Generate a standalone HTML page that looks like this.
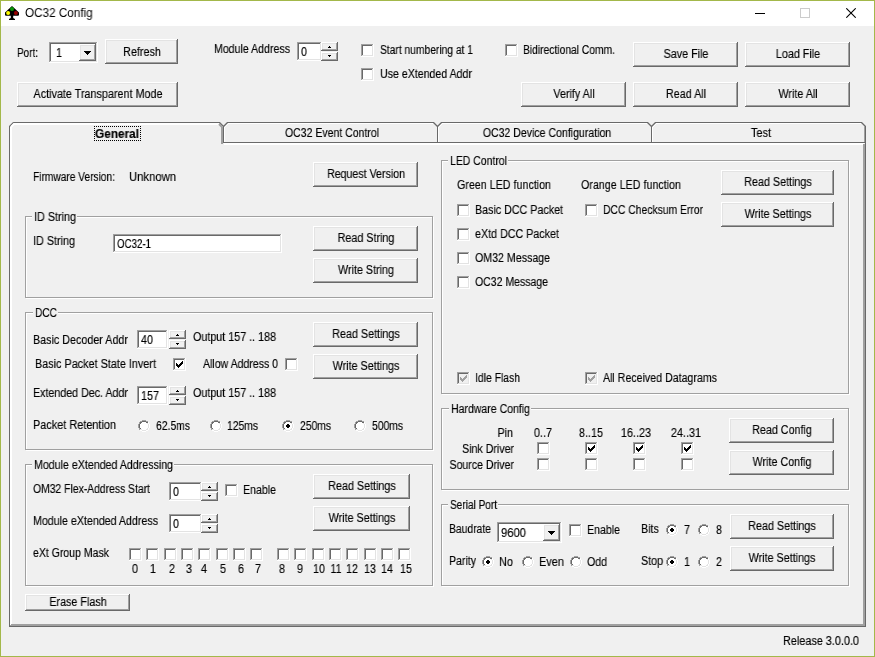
<!DOCTYPE html>
<html><head><meta charset="utf-8"><title>OC32 Config</title>
<style>
html,body{margin:0;padding:0;overflow:hidden}
body{width:875px;height:657px;overflow:hidden;background:#f0f0f0;position:relative;font-family:"Liberation Sans",sans-serif;font-size:12.5px;color:#000}
#win{position:absolute;left:0;top:0;width:873px;height:655px;border:1px solid #a3b84a;background:#f0f0f0}
#title{position:absolute;left:1px;top:1px;width:873px;height:25px;background:#fff}
.t{position:absolute;white-space:nowrap;will-change:transform;-webkit-text-stroke:0.15px #000;line-height:14px;height:14px;transform-origin:0 0}
.t.c{width:300px;text-align:center;transform-origin:150px 0}
.t.r{width:300px;text-align:right;transform-origin:300px 0}
.b{font-weight:bold}
.abs{position:absolute}
.btn{position:absolute;box-sizing:border-box;background:#f0f0f0;box-shadow:inset -1px -1px 0 #696969,inset 1px 1px 0 #fff,inset -2px -2px 0 #a0a0a0,inset 2px 2px 0 #e3e3e3}
.sunk{position:absolute;box-sizing:border-box;background:#fff;box-shadow:inset -1px -1px 0 #fff,inset 1px 1px 0 #a0a0a0,inset -2px -2px 0 #e3e3e3,inset 2px 2px 0 #696969}
.cb{position:absolute;width:13px;height:13px;background:#fff;box-shadow:inset -1px -1px 0 #fff,inset 1px 1px 0 #a0a0a0,inset -2px -2px 0 #e3e3e3,inset 2px 2px 0 #696969}
.cb.dis{background:#f0f0f0}
.rb{position:absolute}
.grp{position:absolute;border:1px solid #a0a0a0;box-shadow:1px 1px 0 #fff,inset 1px 1px 0 #fff}
.lg{position:absolute;height:12px;background:#f0f0f0}
.ln{position:absolute}
</style></head><body>
<div id="win"></div><div id="title"></div>

<svg class="abs" style="left:5px;top:6px" width="14" height="14" viewBox="0 0 14 14">
<path d="M7 0L14 6.6V8.8Q14 9.8 13 9.8H8.2V12L10 13V14H4V13L5.8 12V9.8H1Q0 9.8 0 8.8V6.6z" fill="#000"/>
<circle cx="7" cy="3" r="2" fill="#089808"/><circle cx="3.1" cy="7" r="2" fill="#ffff00"/><circle cx="10.9" cy="7" r="2" fill="#980000"/></svg>
<span class="abs" style="left:25px;top:5px;font-size:12px;line-height:16px;white-space:nowrap;transform-origin:0 0;transform:scaleX(.975);will-change:transform" id="ttl">OC32 Config</span>
<div class="ln" style="left:755px;top:13px;width:10px;height:1px;background:#000"></div>
<div class="ln" style="left:800px;top:8px;width:8px;height:8px;border:1px solid #cccccc"></div>
<svg class="abs" style="left:846px;top:8px" width="10" height="10" viewBox="0 0 10 10"><path d="M0.3 0.3L9.7 9.7M9.7 0.3L0.3 9.7" stroke="#000" stroke-width="1.1" fill="none"/></svg>
<span class="t" style="left:16.5px;top:46px;transform:scaleX(0.7953)">Port:</span>
<div class="sunk" style="left:49px;top:42px;width:49px;height:21px"></div>
<div class="btn" style="left:79px;top:44px;width:17px;height:17px"></div>
<svg class="abs" style="left:84px;top:51px" width="7" height="4" viewBox="0 0 7 4" shape-rendering="crispEdges"><path d="M0 0h7v1h-1v1h-1v1h-1v1h-1v-1h-1v-1h-1v-1h-1z" fill="#000"/></svg>
<span class="t" style="left:55.5px;top:46px;transform:scaleX(0.86)">1</span>
<div class="btn" style="left:105px;top:39px;width:73px;height:25px"></div>
<span class="t c" style="left:-8.5px;top:45px;transform:scaleX(0.86)">Refresh</span>
<span class="t" style="left:213.5px;top:42px;transform:scaleX(0.8478)">Module Address</span>
<div class="sunk" style="left:297px;top:42px;width:25px;height:19px"></div>
<span class="t" style="left:300.5px;top:45px;transform:scaleX(0.86)">0</span>
<div class="btn" style="left:321px;top:42px;width:17px;height:9px"></div>
<svg class="abs" style="left:328px;top:46px" width="3" height="2" viewBox="0 0 3 2" shape-rendering="crispEdges"><path d="M1 0h1v1h1v1h-3v-1h1z" fill="#000"/></svg>
<div class="btn" style="left:321px;top:52px;width:17px;height:9px"></div>
<svg class="abs" style="left:328px;top:55px" width="3" height="2" viewBox="0 0 3 2" shape-rendering="crispEdges"><path d="M0 0h3v1h-1v1h-1v-1h-1z" fill="#000"/></svg>
<div class="cb" style="left:361px;top:44px"></div>
<span class="t" style="left:379.5px;top:43px;transform:scaleX(0.8211)">Start numbering at 1</span>
<div class="cb" style="left:361px;top:68px"></div>
<span class="t" style="left:379.5px;top:67px;transform:scaleX(0.8485)">Use eXtended Addr</span>
<div class="cb" style="left:505px;top:44px"></div>
<span class="t" style="left:522.5px;top:43px;transform:scaleX(0.8226)">Bidirectional Comm.</span>
<div class="btn" style="left:633px;top:42px;width:105px;height:25px"></div>
<span class="t c" style="left:535.5px;top:47px;transform:scaleX(0.86)">Save File</span>
<div class="btn" style="left:745px;top:42px;width:105px;height:25px"></div>
<span class="t c" style="left:647.5px;top:47px;transform:scaleX(0.86)">Load File</span>
<div class="btn" style="left:17px;top:82px;width:161px;height:25px"></div>
<span class="t c" style="left:-52.5px;top:87px;transform:scaleX(0.8635)">Activate Transparent Mode</span>
<div class="btn" style="left:521px;top:82px;width:105px;height:25px"></div>
<span class="t c" style="left:423.5px;top:87px;transform:scaleX(0.86)">Verify All</span>
<div class="btn" style="left:633px;top:82px;width:105px;height:25px"></div>
<span class="t c" style="left:535.5px;top:87px;transform:scaleX(0.86)">Read All</span>
<div class="btn" style="left:745px;top:82px;width:105px;height:25px"></div>
<span class="t c" style="left:647.5px;top:87px;transform:scaleX(0.86)">Write All</span>
<svg class="abs" style="left:0;top:0" width="875" height="657" viewBox="0 0 875 657"><rect x="9" y="126" width="1" height="501" fill="#696969" shape-rendering="crispEdges"/><rect x="9" y="626" width="857" height="1" fill="#696969" shape-rendering="crispEdges"/><rect x="865" y="126" width="1" height="501" fill="#696969" shape-rendering="crispEdges"/><rect x="223" y="142" width="643" height="1" fill="#696969" shape-rendering="crispEdges"/><rect x="10" y="127" width="2" height="498" fill="#fff" shape-rendering="crispEdges"/><rect x="224" y="143" width="640" height="2" fill="#fff" shape-rendering="crispEdges"/><rect x="863" y="144" width="2" height="482" fill="#a0a0a0" shape-rendering="crispEdges"/><rect x="11" y="624" width="854" height="2" fill="#a0a0a0" shape-rendering="crispEdges"/><rect x="10" y="625" width="1" height="1" fill="#a0a0a0" shape-rendering="crispEdges"/><rect x="863" y="143" width="1" height="1" fill="#fff" shape-rendering="crispEdges"/><rect x="13" y="122" width="207" height="1" fill="#696969" shape-rendering="crispEdges"/><path d="M9.5 126.5L13.5 122.5" fill="none" stroke="#696969" stroke-width="1.2"/><path d="M223.5 126.5L219.5 122.5" fill="none" stroke="#696969" stroke-width="1.2"/><rect x="14" y="123" width="205" height="2" fill="#fff" shape-rendering="crispEdges"/><path d="M11 127L14.5 123.5" fill="none" stroke="#fff" stroke-width="2"/><rect x="221" y="127" width="2" height="17" fill="#a0a0a0" shape-rendering="crispEdges"/><path d="M222 127L219 124" fill="none" stroke="#a0a0a0" stroke-width="2"/><rect x="227" y="122" width="207" height="1" fill="#696969" shape-rendering="crispEdges"/><path d="M223.5 126.5L227.5 122.5" fill="none" stroke="#696969" stroke-width="1.2"/><path d="M437.5 126.5L433.5 122.5" fill="none" stroke="#696969" stroke-width="1.2"/><rect x="223" y="126" width="1" height="17" fill="#696969" shape-rendering="crispEdges"/><rect x="228" y="123" width="205" height="1" fill="#fff" shape-rendering="crispEdges"/><rect x="224" y="127" width="1" height="15" fill="#fff" shape-rendering="crispEdges"/><path d="M224.5 127.5L228.5 123.5" fill="none" stroke="#fff" stroke-width="1"/><rect x="441" y="122" width="207" height="1" fill="#696969" shape-rendering="crispEdges"/><path d="M437.5 126.5L441.5 122.5" fill="none" stroke="#696969" stroke-width="1.2"/><path d="M651.5 126.5L647.5 122.5" fill="none" stroke="#696969" stroke-width="1.2"/><rect x="437" y="126" width="1" height="17" fill="#696969" shape-rendering="crispEdges"/><rect x="442" y="123" width="205" height="1" fill="#fff" shape-rendering="crispEdges"/><rect x="438" y="127" width="1" height="15" fill="#fff" shape-rendering="crispEdges"/><path d="M438.5 127.5L442.5 123.5" fill="none" stroke="#fff" stroke-width="1"/><rect x="655" y="122" width="207" height="1" fill="#696969" shape-rendering="crispEdges"/><path d="M651.5 126.5L655.5 122.5" fill="none" stroke="#696969" stroke-width="1.2"/><path d="M865.5 126.5L861.5 122.5" fill="none" stroke="#696969" stroke-width="1.2"/><rect x="651" y="126" width="1" height="17" fill="#696969" shape-rendering="crispEdges"/><rect x="656" y="123" width="205" height="1" fill="#fff" shape-rendering="crispEdges"/><rect x="652" y="127" width="1" height="15" fill="#fff" shape-rendering="crispEdges"/><path d="M652.5 127.5L656.5 123.5" fill="none" stroke="#fff" stroke-width="1"/><rect x="864" y="126" width="1" height="16" fill="#a0a0a0" shape-rendering="crispEdges"/></svg>
<span class="t c b" style="left:-33px;top:127px;transform:scaleX(0.945)">General</span>
<div class="ln" style="left:94px;top:126px;width:45px;height:13px;border:1px dotted #000"></div>
<span class="t c" style="left:181.5px;top:126px;transform:scaleX(0.8403)">OC32 Event Control</span>
<span class="t c" style="left:396.75px;top:126px;transform:scaleX(0.8444)">OC32 Device Configuration</span>
<span class="t c" style="left:611px;top:126px;transform:scaleX(0.8719)">Test</span>
<span class="t" style="left:32.5px;top:170px;transform:scaleX(0.814)">Firmware Version:</span>
<span class="t" style="left:128.5px;top:170px;transform:scaleX(0.9017)">Unknown</span>
<div class="btn" style="left:313px;top:162px;width:105px;height:25px"></div>
<span class="t c" style="left:215.5px;top:167px;transform:scaleX(0.8503)">Request Version</span>
<div class="grp" style="left:25px;top:216px;width:406px;height:80px"></div>
<div class="lg" style="left:32px;top:210px;width:45px"></div>
<span class="t" style="left:33.5px;top:210px;transform:scaleX(0.8635)">ID String</span>
<span class="t" style="left:32.5px;top:234px;transform:scaleX(0.8635)">ID String</span>
<div class="sunk" style="left:113px;top:234px;width:169px;height:19px"></div>
<span class="t" style="left:116.5px;top:237px;transform:scaleX(0.7766)">OC32-1</span>
<div class="btn" style="left:313px;top:226px;width:105px;height:25px"></div>
<span class="t c" style="left:215.5px;top:231px;transform:scaleX(0.86)">Read String</span>
<div class="btn" style="left:313px;top:258px;width:105px;height:25px"></div>
<span class="t c" style="left:215.5px;top:263px;transform:scaleX(0.86)">Write String</span>
<div class="grp" style="left:25px;top:312px;width:406px;height:136px"></div>
<div class="lg" style="left:33px;top:306px;width:25px"></div>
<span class="t" style="left:34.5px;top:306px;transform:scaleX(0.812)">DCC</span>
<span class="t" style="left:32.5px;top:333px;transform:scaleX(0.8599)">Basic Decoder Addr</span>
<div class="sunk" style="left:137px;top:330px;width:31px;height:19px"></div>
<span class="t" style="left:140.5px;top:333px;transform:scaleX(0.86)">40</span>
<div class="btn" style="left:169px;top:330px;width:17px;height:9px"></div>
<svg class="abs" style="left:176px;top:334px" width="3" height="2" viewBox="0 0 3 2" shape-rendering="crispEdges"><path d="M1 0h1v1h1v1h-3v-1h1z" fill="#000"/></svg>
<div class="btn" style="left:169px;top:340px;width:17px;height:9px"></div>
<svg class="abs" style="left:176px;top:343px" width="3" height="2" viewBox="0 0 3 2" shape-rendering="crispEdges"><path d="M0 0h3v1h-1v1h-1v-1h-1z" fill="#000"/></svg>
<span class="t" style="left:192.5px;top:330px;transform:scaleX(0.8591)">Output 157 .. 188</span>
<div class="btn" style="left:313px;top:322px;width:105px;height:25px"></div>
<span class="t c" style="left:215.5px;top:327px;transform:scaleX(0.86)">Read Settings</span>
<span class="t" style="left:34.5px;top:357px;transform:scaleX(0.8664)">Basic Packet State Invert</span>
<div class="cb" style="left:173px;top:358px"><svg width="13" height="13" viewBox="0 0 13 13" style="position:absolute;left:0;top:0" shape-rendering="crispEdges" fill="#000"><rect x="3" y="5" width="1" height="3"/><rect x="4" y="6" width="1" height="3"/><rect x="5" y="7" width="1" height="3"/><rect x="6" y="6" width="1" height="3"/><rect x="7" y="5" width="1" height="3"/><rect x="8" y="4" width="1" height="3"/><rect x="9" y="3" width="1" height="3"/></svg></div>
<span class="t" style="left:202.5px;top:357px;transform:scaleX(0.8433)">Allow Address 0</span>
<div class="cb" style="left:285px;top:358px"></div>
<div class="btn" style="left:313px;top:354px;width:105px;height:25px"></div>
<span class="t c" style="left:215.5px;top:359px;transform:scaleX(0.86)">Write Settings</span>
<span class="t" style="left:32.5px;top:386px;transform:scaleX(0.8544)">Extended Dec. Addr</span>
<div class="sunk" style="left:137px;top:386px;width:31px;height:19px"></div>
<span class="t" style="left:140.5px;top:389px;transform:scaleX(0.86)">157</span>
<div class="btn" style="left:169px;top:386px;width:17px;height:9px"></div>
<svg class="abs" style="left:176px;top:390px" width="3" height="2" viewBox="0 0 3 2" shape-rendering="crispEdges"><path d="M1 0h1v1h1v1h-3v-1h1z" fill="#000"/></svg>
<div class="btn" style="left:169px;top:396px;width:17px;height:9px"></div>
<svg class="abs" style="left:176px;top:399px" width="3" height="2" viewBox="0 0 3 2" shape-rendering="crispEdges"><path d="M0 0h3v1h-1v1h-1v-1h-1z" fill="#000"/></svg>
<span class="t" style="left:192.5px;top:386px;transform:scaleX(0.8591)">Output 157 .. 188</span>
<span class="t" style="left:32.5px;top:418px;transform:scaleX(0.8718)">Packet Retention</span>
<svg class="rb" style="left:138px;top:420px" width="12" height="12" viewBox="0 0 12 12" shape-rendering="crispEdges"><rect x="4" y="0" width="4" height="1" fill="#a0a0a0"/><rect x="2" y="1" width="2" height="1" fill="#a0a0a0"/><rect x="4" y="1" width="4" height="1" fill="#696969"/><rect x="8" y="1" width="2" height="1" fill="#a0a0a0"/><rect x="1" y="2" width="1" height="1" fill="#a0a0a0"/><rect x="2" y="2" width="2" height="1" fill="#696969"/><rect x="4" y="2" width="4" height="1" fill="#ffffff"/><rect x="8" y="2" width="2" height="1" fill="#696969"/><rect x="10" y="2" width="1" height="1" fill="#ffffff"/><rect x="1" y="3" width="1" height="1" fill="#a0a0a0"/><rect x="2" y="3" width="1" height="1" fill="#696969"/><rect x="3" y="3" width="6" height="1" fill="#ffffff"/><rect x="9" y="3" width="1" height="1" fill="#e3e3e3"/><rect x="10" y="3" width="1" height="1" fill="#ffffff"/><rect x="0" y="4" width="1" height="1" fill="#a0a0a0"/><rect x="1" y="4" width="1" height="1" fill="#696969"/><rect x="2" y="4" width="8" height="1" fill="#ffffff"/><rect x="10" y="4" width="1" height="1" fill="#e3e3e3"/><rect x="11" y="4" width="1" height="1" fill="#ffffff"/><rect x="0" y="5" width="1" height="1" fill="#a0a0a0"/><rect x="1" y="5" width="1" height="1" fill="#696969"/><rect x="2" y="5" width="8" height="1" fill="#ffffff"/><rect x="10" y="5" width="1" height="1" fill="#e3e3e3"/><rect x="11" y="5" width="1" height="1" fill="#ffffff"/><rect x="0" y="6" width="1" height="1" fill="#a0a0a0"/><rect x="1" y="6" width="1" height="1" fill="#696969"/><rect x="2" y="6" width="8" height="1" fill="#ffffff"/><rect x="10" y="6" width="1" height="1" fill="#e3e3e3"/><rect x="11" y="6" width="1" height="1" fill="#ffffff"/><rect x="0" y="7" width="1" height="1" fill="#a0a0a0"/><rect x="1" y="7" width="1" height="1" fill="#696969"/><rect x="2" y="7" width="8" height="1" fill="#ffffff"/><rect x="10" y="7" width="1" height="1" fill="#e3e3e3"/><rect x="11" y="7" width="1" height="1" fill="#ffffff"/><rect x="1" y="8" width="1" height="1" fill="#a0a0a0"/><rect x="2" y="8" width="1" height="1" fill="#696969"/><rect x="3" y="8" width="6" height="1" fill="#ffffff"/><rect x="9" y="8" width="1" height="1" fill="#e3e3e3"/><rect x="10" y="8" width="1" height="1" fill="#ffffff"/><rect x="1" y="9" width="1" height="1" fill="#a0a0a0"/><rect x="2" y="9" width="2" height="1" fill="#e3e3e3"/><rect x="4" y="9" width="4" height="1" fill="#ffffff"/><rect x="8" y="9" width="2" height="1" fill="#e3e3e3"/><rect x="10" y="9" width="1" height="1" fill="#ffffff"/><rect x="2" y="10" width="2" height="1" fill="#ffffff"/><rect x="4" y="10" width="4" height="1" fill="#e3e3e3"/><rect x="8" y="10" width="2" height="1" fill="#ffffff"/><rect x="4" y="11" width="4" height="1" fill="#ffffff"/></svg>
<span class="t" style="left:155.5px;top:419px;transform:scaleX(0.8293)">62.5ms</span>
<svg class="rb" style="left:210px;top:420px" width="12" height="12" viewBox="0 0 12 12" shape-rendering="crispEdges"><rect x="4" y="0" width="4" height="1" fill="#a0a0a0"/><rect x="2" y="1" width="2" height="1" fill="#a0a0a0"/><rect x="4" y="1" width="4" height="1" fill="#696969"/><rect x="8" y="1" width="2" height="1" fill="#a0a0a0"/><rect x="1" y="2" width="1" height="1" fill="#a0a0a0"/><rect x="2" y="2" width="2" height="1" fill="#696969"/><rect x="4" y="2" width="4" height="1" fill="#ffffff"/><rect x="8" y="2" width="2" height="1" fill="#696969"/><rect x="10" y="2" width="1" height="1" fill="#ffffff"/><rect x="1" y="3" width="1" height="1" fill="#a0a0a0"/><rect x="2" y="3" width="1" height="1" fill="#696969"/><rect x="3" y="3" width="6" height="1" fill="#ffffff"/><rect x="9" y="3" width="1" height="1" fill="#e3e3e3"/><rect x="10" y="3" width="1" height="1" fill="#ffffff"/><rect x="0" y="4" width="1" height="1" fill="#a0a0a0"/><rect x="1" y="4" width="1" height="1" fill="#696969"/><rect x="2" y="4" width="8" height="1" fill="#ffffff"/><rect x="10" y="4" width="1" height="1" fill="#e3e3e3"/><rect x="11" y="4" width="1" height="1" fill="#ffffff"/><rect x="0" y="5" width="1" height="1" fill="#a0a0a0"/><rect x="1" y="5" width="1" height="1" fill="#696969"/><rect x="2" y="5" width="8" height="1" fill="#ffffff"/><rect x="10" y="5" width="1" height="1" fill="#e3e3e3"/><rect x="11" y="5" width="1" height="1" fill="#ffffff"/><rect x="0" y="6" width="1" height="1" fill="#a0a0a0"/><rect x="1" y="6" width="1" height="1" fill="#696969"/><rect x="2" y="6" width="8" height="1" fill="#ffffff"/><rect x="10" y="6" width="1" height="1" fill="#e3e3e3"/><rect x="11" y="6" width="1" height="1" fill="#ffffff"/><rect x="0" y="7" width="1" height="1" fill="#a0a0a0"/><rect x="1" y="7" width="1" height="1" fill="#696969"/><rect x="2" y="7" width="8" height="1" fill="#ffffff"/><rect x="10" y="7" width="1" height="1" fill="#e3e3e3"/><rect x="11" y="7" width="1" height="1" fill="#ffffff"/><rect x="1" y="8" width="1" height="1" fill="#a0a0a0"/><rect x="2" y="8" width="1" height="1" fill="#696969"/><rect x="3" y="8" width="6" height="1" fill="#ffffff"/><rect x="9" y="8" width="1" height="1" fill="#e3e3e3"/><rect x="10" y="8" width="1" height="1" fill="#ffffff"/><rect x="1" y="9" width="1" height="1" fill="#a0a0a0"/><rect x="2" y="9" width="2" height="1" fill="#e3e3e3"/><rect x="4" y="9" width="4" height="1" fill="#ffffff"/><rect x="8" y="9" width="2" height="1" fill="#e3e3e3"/><rect x="10" y="9" width="1" height="1" fill="#ffffff"/><rect x="2" y="10" width="2" height="1" fill="#ffffff"/><rect x="4" y="10" width="4" height="1" fill="#e3e3e3"/><rect x="8" y="10" width="2" height="1" fill="#ffffff"/><rect x="4" y="11" width="4" height="1" fill="#ffffff"/></svg>
<span class="t" style="left:226.5px;top:419px;transform:scaleX(0.826)">125ms</span>
<svg class="rb" style="left:282px;top:420px" width="12" height="12" viewBox="0 0 12 12" shape-rendering="crispEdges"><rect x="4" y="0" width="4" height="1" fill="#a0a0a0"/><rect x="2" y="1" width="2" height="1" fill="#a0a0a0"/><rect x="4" y="1" width="4" height="1" fill="#696969"/><rect x="8" y="1" width="2" height="1" fill="#a0a0a0"/><rect x="1" y="2" width="1" height="1" fill="#a0a0a0"/><rect x="2" y="2" width="2" height="1" fill="#696969"/><rect x="4" y="2" width="4" height="1" fill="#ffffff"/><rect x="8" y="2" width="2" height="1" fill="#696969"/><rect x="10" y="2" width="1" height="1" fill="#ffffff"/><rect x="1" y="3" width="1" height="1" fill="#a0a0a0"/><rect x="2" y="3" width="1" height="1" fill="#696969"/><rect x="3" y="3" width="6" height="1" fill="#ffffff"/><rect x="9" y="3" width="1" height="1" fill="#e3e3e3"/><rect x="10" y="3" width="1" height="1" fill="#ffffff"/><rect x="0" y="4" width="1" height="1" fill="#a0a0a0"/><rect x="1" y="4" width="1" height="1" fill="#696969"/><rect x="2" y="4" width="3" height="1" fill="#ffffff"/><rect x="5" y="4" width="2" height="1" fill="#000000"/><rect x="7" y="4" width="3" height="1" fill="#ffffff"/><rect x="10" y="4" width="1" height="1" fill="#e3e3e3"/><rect x="11" y="4" width="1" height="1" fill="#ffffff"/><rect x="0" y="5" width="1" height="1" fill="#a0a0a0"/><rect x="1" y="5" width="1" height="1" fill="#696969"/><rect x="2" y="5" width="2" height="1" fill="#ffffff"/><rect x="4" y="5" width="4" height="1" fill="#000000"/><rect x="8" y="5" width="2" height="1" fill="#ffffff"/><rect x="10" y="5" width="1" height="1" fill="#e3e3e3"/><rect x="11" y="5" width="1" height="1" fill="#ffffff"/><rect x="0" y="6" width="1" height="1" fill="#a0a0a0"/><rect x="1" y="6" width="1" height="1" fill="#696969"/><rect x="2" y="6" width="2" height="1" fill="#ffffff"/><rect x="4" y="6" width="4" height="1" fill="#000000"/><rect x="8" y="6" width="2" height="1" fill="#ffffff"/><rect x="10" y="6" width="1" height="1" fill="#e3e3e3"/><rect x="11" y="6" width="1" height="1" fill="#ffffff"/><rect x="0" y="7" width="1" height="1" fill="#a0a0a0"/><rect x="1" y="7" width="1" height="1" fill="#696969"/><rect x="2" y="7" width="3" height="1" fill="#ffffff"/><rect x="5" y="7" width="2" height="1" fill="#000000"/><rect x="7" y="7" width="3" height="1" fill="#ffffff"/><rect x="10" y="7" width="1" height="1" fill="#e3e3e3"/><rect x="11" y="7" width="1" height="1" fill="#ffffff"/><rect x="1" y="8" width="1" height="1" fill="#a0a0a0"/><rect x="2" y="8" width="1" height="1" fill="#696969"/><rect x="3" y="8" width="6" height="1" fill="#ffffff"/><rect x="9" y="8" width="1" height="1" fill="#e3e3e3"/><rect x="10" y="8" width="1" height="1" fill="#ffffff"/><rect x="1" y="9" width="1" height="1" fill="#a0a0a0"/><rect x="2" y="9" width="2" height="1" fill="#e3e3e3"/><rect x="4" y="9" width="4" height="1" fill="#ffffff"/><rect x="8" y="9" width="2" height="1" fill="#e3e3e3"/><rect x="10" y="9" width="1" height="1" fill="#ffffff"/><rect x="2" y="10" width="2" height="1" fill="#ffffff"/><rect x="4" y="10" width="4" height="1" fill="#e3e3e3"/><rect x="8" y="10" width="2" height="1" fill="#ffffff"/><rect x="4" y="11" width="4" height="1" fill="#ffffff"/></svg>
<span class="t" style="left:299.5px;top:419px;transform:scaleX(0.826)">250ms</span>
<svg class="rb" style="left:354px;top:420px" width="12" height="12" viewBox="0 0 12 12" shape-rendering="crispEdges"><rect x="4" y="0" width="4" height="1" fill="#a0a0a0"/><rect x="2" y="1" width="2" height="1" fill="#a0a0a0"/><rect x="4" y="1" width="4" height="1" fill="#696969"/><rect x="8" y="1" width="2" height="1" fill="#a0a0a0"/><rect x="1" y="2" width="1" height="1" fill="#a0a0a0"/><rect x="2" y="2" width="2" height="1" fill="#696969"/><rect x="4" y="2" width="4" height="1" fill="#ffffff"/><rect x="8" y="2" width="2" height="1" fill="#696969"/><rect x="10" y="2" width="1" height="1" fill="#ffffff"/><rect x="1" y="3" width="1" height="1" fill="#a0a0a0"/><rect x="2" y="3" width="1" height="1" fill="#696969"/><rect x="3" y="3" width="6" height="1" fill="#ffffff"/><rect x="9" y="3" width="1" height="1" fill="#e3e3e3"/><rect x="10" y="3" width="1" height="1" fill="#ffffff"/><rect x="0" y="4" width="1" height="1" fill="#a0a0a0"/><rect x="1" y="4" width="1" height="1" fill="#696969"/><rect x="2" y="4" width="8" height="1" fill="#ffffff"/><rect x="10" y="4" width="1" height="1" fill="#e3e3e3"/><rect x="11" y="4" width="1" height="1" fill="#ffffff"/><rect x="0" y="5" width="1" height="1" fill="#a0a0a0"/><rect x="1" y="5" width="1" height="1" fill="#696969"/><rect x="2" y="5" width="8" height="1" fill="#ffffff"/><rect x="10" y="5" width="1" height="1" fill="#e3e3e3"/><rect x="11" y="5" width="1" height="1" fill="#ffffff"/><rect x="0" y="6" width="1" height="1" fill="#a0a0a0"/><rect x="1" y="6" width="1" height="1" fill="#696969"/><rect x="2" y="6" width="8" height="1" fill="#ffffff"/><rect x="10" y="6" width="1" height="1" fill="#e3e3e3"/><rect x="11" y="6" width="1" height="1" fill="#ffffff"/><rect x="0" y="7" width="1" height="1" fill="#a0a0a0"/><rect x="1" y="7" width="1" height="1" fill="#696969"/><rect x="2" y="7" width="8" height="1" fill="#ffffff"/><rect x="10" y="7" width="1" height="1" fill="#e3e3e3"/><rect x="11" y="7" width="1" height="1" fill="#ffffff"/><rect x="1" y="8" width="1" height="1" fill="#a0a0a0"/><rect x="2" y="8" width="1" height="1" fill="#696969"/><rect x="3" y="8" width="6" height="1" fill="#ffffff"/><rect x="9" y="8" width="1" height="1" fill="#e3e3e3"/><rect x="10" y="8" width="1" height="1" fill="#ffffff"/><rect x="1" y="9" width="1" height="1" fill="#a0a0a0"/><rect x="2" y="9" width="2" height="1" fill="#e3e3e3"/><rect x="4" y="9" width="4" height="1" fill="#ffffff"/><rect x="8" y="9" width="2" height="1" fill="#e3e3e3"/><rect x="10" y="9" width="1" height="1" fill="#ffffff"/><rect x="2" y="10" width="2" height="1" fill="#ffffff"/><rect x="4" y="10" width="4" height="1" fill="#e3e3e3"/><rect x="8" y="10" width="2" height="1" fill="#ffffff"/><rect x="4" y="11" width="4" height="1" fill="#ffffff"/></svg>
<span class="t" style="left:371.5px;top:419px;transform:scaleX(0.826)">500ms</span>
<div class="grp" style="left:25px;top:464px;width:406px;height:120px"></div>
<div class="lg" style="left:32px;top:458px;width:142px"></div>
<span class="t" style="left:33.5px;top:458px;transform:scaleX(0.8511)">Module eXtended Addressing</span>
<span class="t" style="left:32.5px;top:482px;transform:scaleX(0.8297)">OM32 Flex-Address Start</span>
<div class="sunk" style="left:169px;top:482px;width:33px;height:19px"></div>
<span class="t" style="left:172.5px;top:485px;transform:scaleX(0.86)">0</span>
<div class="btn" style="left:201px;top:482px;width:17px;height:9px"></div>
<svg class="abs" style="left:208px;top:486px" width="3" height="2" viewBox="0 0 3 2" shape-rendering="crispEdges"><path d="M1 0h1v1h1v1h-3v-1h1z" fill="#000"/></svg>
<div class="btn" style="left:201px;top:492px;width:17px;height:9px"></div>
<svg class="abs" style="left:208px;top:495px" width="3" height="2" viewBox="0 0 3 2" shape-rendering="crispEdges"><path d="M0 0h3v1h-1v1h-1v-1h-1z" fill="#000"/></svg>
<div class="cb" style="left:225px;top:484px"></div>
<span class="t" style="left:242.5px;top:483px;transform:scaleX(0.8475)">Enable</span>
<div class="btn" style="left:313px;top:474px;width:97px;height:25px"></div>
<span class="t c" style="left:211.5px;top:479px;transform:scaleX(0.86)">Read Settings</span>
<span class="t" style="left:32.5px;top:514px;transform:scaleX(0.8524)">Module eXtended Address</span>
<div class="sunk" style="left:169px;top:514px;width:33px;height:19px"></div>
<span class="t" style="left:172.5px;top:517px;transform:scaleX(0.86)">0</span>
<div class="btn" style="left:201px;top:514px;width:17px;height:9px"></div>
<svg class="abs" style="left:208px;top:518px" width="3" height="2" viewBox="0 0 3 2" shape-rendering="crispEdges"><path d="M1 0h1v1h1v1h-3v-1h1z" fill="#000"/></svg>
<div class="btn" style="left:201px;top:524px;width:17px;height:9px"></div>
<svg class="abs" style="left:208px;top:527px" width="3" height="2" viewBox="0 0 3 2" shape-rendering="crispEdges"><path d="M0 0h3v1h-1v1h-1v-1h-1z" fill="#000"/></svg>
<div class="btn" style="left:313px;top:506px;width:97px;height:25px"></div>
<span class="t c" style="left:211.5px;top:511px;transform:scaleX(0.86)">Write Settings</span>
<span class="t" style="left:32.5px;top:546px;transform:scaleX(0.8414)">eXt Group Mask</span>
<div class="cb" style="left:129px;top:548px"></div>
<span class="t c" style="left:-14.800000000000011px;top:562px;transform:scaleX(0.86)">0</span>
<div class="cb" style="left:146px;top:548px"></div>
<span class="t c" style="left:3px;top:562px;transform:scaleX(0.86)">1</span>
<div class="cb" style="left:164px;top:548px"></div>
<span class="t c" style="left:21.69999999999999px;top:562px;transform:scaleX(0.86)">2</span>
<div class="cb" style="left:181px;top:548px"></div>
<span class="t c" style="left:39.30000000000001px;top:562px;transform:scaleX(0.86)">3</span>
<div class="cb" style="left:198px;top:548px"></div>
<span class="t c" style="left:54.400000000000006px;top:562px;transform:scaleX(0.86)">4</span>
<div class="cb" style="left:216px;top:548px"></div>
<span class="t c" style="left:72.6px;top:562px;transform:scaleX(0.86)">5</span>
<div class="cb" style="left:233px;top:548px"></div>
<span class="t c" style="left:90.5px;top:562px;transform:scaleX(0.86)">6</span>
<div class="cb" style="left:250px;top:548px"></div>
<span class="t c" style="left:108.39999999999998px;top:562px;transform:scaleX(0.86)">7</span>
<div class="cb" style="left:277px;top:548px"></div>
<span class="t c" style="left:132.39999999999998px;top:562px;transform:scaleX(0.86)">8</span>
<div class="cb" style="left:294px;top:548px"></div>
<span class="t c" style="left:150.3px;top:562px;transform:scaleX(0.86)">9</span>
<div class="cb" style="left:312px;top:548px"></div>
<span class="t c" style="left:168.60000000000002px;top:562px;transform:scaleX(0.86)">10</span>
<div class="cb" style="left:329px;top:548px"></div>
<span class="t c" style="left:185.7px;top:562px;transform:scaleX(0.86)">11</span>
<div class="cb" style="left:346px;top:548px"></div>
<span class="t c" style="left:201.7px;top:562px;transform:scaleX(0.86)">12</span>
<div class="cb" style="left:364px;top:548px"></div>
<span class="t c" style="left:219.60000000000002px;top:562px;transform:scaleX(0.86)">13</span>
<div class="cb" style="left:381px;top:548px"></div>
<span class="t c" style="left:237.39999999999998px;top:562px;transform:scaleX(0.86)">14</span>
<div class="cb" style="left:398px;top:548px"></div>
<span class="t c" style="left:255.60000000000002px;top:562px;transform:scaleX(0.86)">15</span>
<div class="btn" style="left:25px;top:594px;width:105px;height:17px"></div>
<span class="t c" style="left:-72.5px;top:595px;transform:scaleX(0.86)">Erase Flash</span>
<div class="grp" style="left:441px;top:160px;width:406px;height:232px"></div>
<div class="lg" style="left:448px;top:154px;width:60px"></div>
<span class="t" style="left:449.5px;top:154px;transform:scaleX(0.8371)">LED Control</span>
<span class="t" style="left:456.5px;top:178px;transform:scaleX(0.8561)">Green LED function</span>
<span class="t" style="left:580.5px;top:178px;transform:scaleX(0.8565)">Orange LED function</span>
<div class="btn" style="left:721px;top:170px;width:113px;height:25px"></div>
<span class="t c" style="left:627.5px;top:175px;transform:scaleX(0.86)">Read Settings</span>
<div class="btn" style="left:721px;top:202px;width:113px;height:25px"></div>
<span class="t c" style="left:627.5px;top:207px;transform:scaleX(0.86)">Write Settings</span>
<div class="cb" style="left:457px;top:204px"></div>
<span class="t" style="left:474.5px;top:203px;transform:scaleX(0.8559)">Basic DCC Packet</span>
<div class="cb" style="left:585px;top:204px"></div>
<span class="t" style="left:602.5px;top:203px;transform:scaleX(0.8274)">DCC Checksum Error</span>
<div class="cb" style="left:457px;top:228px"></div>
<span class="t" style="left:474.5px;top:227px;transform:scaleX(0.8574)">eXtd DCC Packet</span>
<div class="cb" style="left:457px;top:252px"></div>
<span class="t" style="left:474.5px;top:251px;transform:scaleX(0.85)">OM32 Message</span>
<div class="cb" style="left:457px;top:276px"></div>
<span class="t" style="left:474.5px;top:275px;transform:scaleX(0.8404)">OC32 Message</span>
<div class="cb dis" style="left:457px;top:372px"><svg width="13" height="13" viewBox="0 0 13 13" style="position:absolute;left:0;top:0" shape-rendering="crispEdges" fill="#a0a0a0"><rect x="3" y="5" width="1" height="3"/><rect x="4" y="6" width="1" height="3"/><rect x="5" y="7" width="1" height="3"/><rect x="6" y="6" width="1" height="3"/><rect x="7" y="5" width="1" height="3"/><rect x="8" y="4" width="1" height="3"/><rect x="9" y="3" width="1" height="3"/></svg></div>
<span class="t" style="left:474.5px;top:371px;transform:scaleX(0.8302)">Idle Flash</span>
<div class="cb dis" style="left:585px;top:372px"><svg width="13" height="13" viewBox="0 0 13 13" style="position:absolute;left:0;top:0" shape-rendering="crispEdges" fill="#a0a0a0"><rect x="3" y="5" width="1" height="3"/><rect x="4" y="6" width="1" height="3"/><rect x="5" y="7" width="1" height="3"/><rect x="6" y="6" width="1" height="3"/><rect x="7" y="5" width="1" height="3"/><rect x="8" y="4" width="1" height="3"/><rect x="9" y="3" width="1" height="3"/></svg></div>
<span class="t" style="left:602.5px;top:371px;transform:scaleX(0.8502)">All Received Datagrams</span>
<div class="grp" style="left:441px;top:408px;width:406px;height:80px"></div>
<div class="lg" style="left:449px;top:402px;width:82px"></div>
<span class="t" style="left:450.5px;top:402px;transform:scaleX(0.8422)">Hardware Config</span>
<span class="t r" style="left:213px;top:426px;transform:scaleX(0.86)">Pin</span>
<span class="t c" style="left:393px;top:426px;transform:scaleX(0.86)">0..7</span>
<span class="t c" style="left:441px;top:426px;transform:scaleX(0.86)">8..15</span>
<span class="t c" style="left:486px;top:426px;transform:scaleX(0.86)">16..23</span>
<span class="t c" style="left:536px;top:426px;transform:scaleX(0.86)">24..31</span>
<span class="t r" style="left:214px;top:442px;transform:scaleX(0.8507)">Sink Driver</span>
<span class="t r" style="left:214px;top:458px;transform:scaleX(0.844)">Source Driver</span>
<div class="cb" style="left:537px;top:442px"></div>
<div class="cb" style="left:537px;top:458px"></div>
<div class="cb" style="left:585px;top:442px"><svg width="13" height="13" viewBox="0 0 13 13" style="position:absolute;left:0;top:0" shape-rendering="crispEdges" fill="#000"><rect x="3" y="5" width="1" height="3"/><rect x="4" y="6" width="1" height="3"/><rect x="5" y="7" width="1" height="3"/><rect x="6" y="6" width="1" height="3"/><rect x="7" y="5" width="1" height="3"/><rect x="8" y="4" width="1" height="3"/><rect x="9" y="3" width="1" height="3"/></svg></div>
<div class="cb" style="left:585px;top:458px"></div>
<div class="cb" style="left:633px;top:442px"><svg width="13" height="13" viewBox="0 0 13 13" style="position:absolute;left:0;top:0" shape-rendering="crispEdges" fill="#000"><rect x="3" y="5" width="1" height="3"/><rect x="4" y="6" width="1" height="3"/><rect x="5" y="7" width="1" height="3"/><rect x="6" y="6" width="1" height="3"/><rect x="7" y="5" width="1" height="3"/><rect x="8" y="4" width="1" height="3"/><rect x="9" y="3" width="1" height="3"/></svg></div>
<div class="cb" style="left:633px;top:458px"></div>
<div class="cb" style="left:681px;top:442px"><svg width="13" height="13" viewBox="0 0 13 13" style="position:absolute;left:0;top:0" shape-rendering="crispEdges" fill="#000"><rect x="3" y="5" width="1" height="3"/><rect x="4" y="6" width="1" height="3"/><rect x="5" y="7" width="1" height="3"/><rect x="6" y="6" width="1" height="3"/><rect x="7" y="5" width="1" height="3"/><rect x="8" y="4" width="1" height="3"/><rect x="9" y="3" width="1" height="3"/></svg></div>
<div class="cb" style="left:681px;top:458px"></div>
<div class="btn" style="left:729px;top:418px;width:105px;height:25px"></div>
<span class="t c" style="left:631.5px;top:423px;transform:scaleX(0.86)">Read Config</span>
<div class="btn" style="left:729px;top:450px;width:105px;height:25px"></div>
<span class="t c" style="left:631.5px;top:455px;transform:scaleX(0.86)">Write Config</span>
<div class="grp" style="left:441px;top:504px;width:406px;height:80px"></div>
<div class="lg" style="left:448px;top:498px;width:50px"></div>
<span class="t" style="left:449.5px;top:498px;transform:scaleX(0.8054)">Serial Port</span>
<span class="t" style="left:448.5px;top:522px;transform:scaleX(0.8278)">Baudrate</span>
<div class="sunk" style="left:497px;top:522px;width:65px;height:21px"></div>
<div class="btn" style="left:543px;top:524px;width:17px;height:17px"></div>
<svg class="abs" style="left:548px;top:531px" width="7" height="4" viewBox="0 0 7 4" shape-rendering="crispEdges"><path d="M0 0h7v1h-1v1h-1v1h-1v1h-1v-1h-1v-1h-1v-1h-1z" fill="#000"/></svg>
<span class="t" style="left:500.5px;top:526px;transform:scaleX(0.8989)">9600</span>
<div class="cb" style="left:569px;top:524px"></div>
<span class="t" style="left:586.5px;top:523px;transform:scaleX(0.8475)">Enable</span>
<span class="t" style="left:640.5px;top:522px;transform:scaleX(0.86)">Bits</span>
<svg class="rb" style="left:666px;top:524px" width="12" height="12" viewBox="0 0 12 12" shape-rendering="crispEdges"><rect x="4" y="0" width="4" height="1" fill="#a0a0a0"/><rect x="2" y="1" width="2" height="1" fill="#a0a0a0"/><rect x="4" y="1" width="4" height="1" fill="#696969"/><rect x="8" y="1" width="2" height="1" fill="#a0a0a0"/><rect x="1" y="2" width="1" height="1" fill="#a0a0a0"/><rect x="2" y="2" width="2" height="1" fill="#696969"/><rect x="4" y="2" width="4" height="1" fill="#ffffff"/><rect x="8" y="2" width="2" height="1" fill="#696969"/><rect x="10" y="2" width="1" height="1" fill="#ffffff"/><rect x="1" y="3" width="1" height="1" fill="#a0a0a0"/><rect x="2" y="3" width="1" height="1" fill="#696969"/><rect x="3" y="3" width="6" height="1" fill="#ffffff"/><rect x="9" y="3" width="1" height="1" fill="#e3e3e3"/><rect x="10" y="3" width="1" height="1" fill="#ffffff"/><rect x="0" y="4" width="1" height="1" fill="#a0a0a0"/><rect x="1" y="4" width="1" height="1" fill="#696969"/><rect x="2" y="4" width="3" height="1" fill="#ffffff"/><rect x="5" y="4" width="2" height="1" fill="#000000"/><rect x="7" y="4" width="3" height="1" fill="#ffffff"/><rect x="10" y="4" width="1" height="1" fill="#e3e3e3"/><rect x="11" y="4" width="1" height="1" fill="#ffffff"/><rect x="0" y="5" width="1" height="1" fill="#a0a0a0"/><rect x="1" y="5" width="1" height="1" fill="#696969"/><rect x="2" y="5" width="2" height="1" fill="#ffffff"/><rect x="4" y="5" width="4" height="1" fill="#000000"/><rect x="8" y="5" width="2" height="1" fill="#ffffff"/><rect x="10" y="5" width="1" height="1" fill="#e3e3e3"/><rect x="11" y="5" width="1" height="1" fill="#ffffff"/><rect x="0" y="6" width="1" height="1" fill="#a0a0a0"/><rect x="1" y="6" width="1" height="1" fill="#696969"/><rect x="2" y="6" width="2" height="1" fill="#ffffff"/><rect x="4" y="6" width="4" height="1" fill="#000000"/><rect x="8" y="6" width="2" height="1" fill="#ffffff"/><rect x="10" y="6" width="1" height="1" fill="#e3e3e3"/><rect x="11" y="6" width="1" height="1" fill="#ffffff"/><rect x="0" y="7" width="1" height="1" fill="#a0a0a0"/><rect x="1" y="7" width="1" height="1" fill="#696969"/><rect x="2" y="7" width="3" height="1" fill="#ffffff"/><rect x="5" y="7" width="2" height="1" fill="#000000"/><rect x="7" y="7" width="3" height="1" fill="#ffffff"/><rect x="10" y="7" width="1" height="1" fill="#e3e3e3"/><rect x="11" y="7" width="1" height="1" fill="#ffffff"/><rect x="1" y="8" width="1" height="1" fill="#a0a0a0"/><rect x="2" y="8" width="1" height="1" fill="#696969"/><rect x="3" y="8" width="6" height="1" fill="#ffffff"/><rect x="9" y="8" width="1" height="1" fill="#e3e3e3"/><rect x="10" y="8" width="1" height="1" fill="#ffffff"/><rect x="1" y="9" width="1" height="1" fill="#a0a0a0"/><rect x="2" y="9" width="2" height="1" fill="#e3e3e3"/><rect x="4" y="9" width="4" height="1" fill="#ffffff"/><rect x="8" y="9" width="2" height="1" fill="#e3e3e3"/><rect x="10" y="9" width="1" height="1" fill="#ffffff"/><rect x="2" y="10" width="2" height="1" fill="#ffffff"/><rect x="4" y="10" width="4" height="1" fill="#e3e3e3"/><rect x="8" y="10" width="2" height="1" fill="#ffffff"/><rect x="4" y="11" width="4" height="1" fill="#ffffff"/></svg>
<span class="t" style="left:683.5px;top:523px;transform:scaleX(0.86)">7</span>
<svg class="rb" style="left:698px;top:524px" width="12" height="12" viewBox="0 0 12 12" shape-rendering="crispEdges"><rect x="4" y="0" width="4" height="1" fill="#a0a0a0"/><rect x="2" y="1" width="2" height="1" fill="#a0a0a0"/><rect x="4" y="1" width="4" height="1" fill="#696969"/><rect x="8" y="1" width="2" height="1" fill="#a0a0a0"/><rect x="1" y="2" width="1" height="1" fill="#a0a0a0"/><rect x="2" y="2" width="2" height="1" fill="#696969"/><rect x="4" y="2" width="4" height="1" fill="#ffffff"/><rect x="8" y="2" width="2" height="1" fill="#696969"/><rect x="10" y="2" width="1" height="1" fill="#ffffff"/><rect x="1" y="3" width="1" height="1" fill="#a0a0a0"/><rect x="2" y="3" width="1" height="1" fill="#696969"/><rect x="3" y="3" width="6" height="1" fill="#ffffff"/><rect x="9" y="3" width="1" height="1" fill="#e3e3e3"/><rect x="10" y="3" width="1" height="1" fill="#ffffff"/><rect x="0" y="4" width="1" height="1" fill="#a0a0a0"/><rect x="1" y="4" width="1" height="1" fill="#696969"/><rect x="2" y="4" width="8" height="1" fill="#ffffff"/><rect x="10" y="4" width="1" height="1" fill="#e3e3e3"/><rect x="11" y="4" width="1" height="1" fill="#ffffff"/><rect x="0" y="5" width="1" height="1" fill="#a0a0a0"/><rect x="1" y="5" width="1" height="1" fill="#696969"/><rect x="2" y="5" width="8" height="1" fill="#ffffff"/><rect x="10" y="5" width="1" height="1" fill="#e3e3e3"/><rect x="11" y="5" width="1" height="1" fill="#ffffff"/><rect x="0" y="6" width="1" height="1" fill="#a0a0a0"/><rect x="1" y="6" width="1" height="1" fill="#696969"/><rect x="2" y="6" width="8" height="1" fill="#ffffff"/><rect x="10" y="6" width="1" height="1" fill="#e3e3e3"/><rect x="11" y="6" width="1" height="1" fill="#ffffff"/><rect x="0" y="7" width="1" height="1" fill="#a0a0a0"/><rect x="1" y="7" width="1" height="1" fill="#696969"/><rect x="2" y="7" width="8" height="1" fill="#ffffff"/><rect x="10" y="7" width="1" height="1" fill="#e3e3e3"/><rect x="11" y="7" width="1" height="1" fill="#ffffff"/><rect x="1" y="8" width="1" height="1" fill="#a0a0a0"/><rect x="2" y="8" width="1" height="1" fill="#696969"/><rect x="3" y="8" width="6" height="1" fill="#ffffff"/><rect x="9" y="8" width="1" height="1" fill="#e3e3e3"/><rect x="10" y="8" width="1" height="1" fill="#ffffff"/><rect x="1" y="9" width="1" height="1" fill="#a0a0a0"/><rect x="2" y="9" width="2" height="1" fill="#e3e3e3"/><rect x="4" y="9" width="4" height="1" fill="#ffffff"/><rect x="8" y="9" width="2" height="1" fill="#e3e3e3"/><rect x="10" y="9" width="1" height="1" fill="#ffffff"/><rect x="2" y="10" width="2" height="1" fill="#ffffff"/><rect x="4" y="10" width="4" height="1" fill="#e3e3e3"/><rect x="8" y="10" width="2" height="1" fill="#ffffff"/><rect x="4" y="11" width="4" height="1" fill="#ffffff"/></svg>
<span class="t" style="left:715.5px;top:523px;transform:scaleX(0.86)">8</span>
<div class="btn" style="left:730px;top:514px;width:104px;height:25px"></div>
<span class="t c" style="left:632.0px;top:519px;transform:scaleX(0.86)">Read Settings</span>
<span class="t" style="left:448.5px;top:554px;transform:scaleX(0.845)">Parity</span>
<svg class="rb" style="left:482px;top:556px" width="12" height="12" viewBox="0 0 12 12" shape-rendering="crispEdges"><rect x="4" y="0" width="4" height="1" fill="#a0a0a0"/><rect x="2" y="1" width="2" height="1" fill="#a0a0a0"/><rect x="4" y="1" width="4" height="1" fill="#696969"/><rect x="8" y="1" width="2" height="1" fill="#a0a0a0"/><rect x="1" y="2" width="1" height="1" fill="#a0a0a0"/><rect x="2" y="2" width="2" height="1" fill="#696969"/><rect x="4" y="2" width="4" height="1" fill="#ffffff"/><rect x="8" y="2" width="2" height="1" fill="#696969"/><rect x="10" y="2" width="1" height="1" fill="#ffffff"/><rect x="1" y="3" width="1" height="1" fill="#a0a0a0"/><rect x="2" y="3" width="1" height="1" fill="#696969"/><rect x="3" y="3" width="6" height="1" fill="#ffffff"/><rect x="9" y="3" width="1" height="1" fill="#e3e3e3"/><rect x="10" y="3" width="1" height="1" fill="#ffffff"/><rect x="0" y="4" width="1" height="1" fill="#a0a0a0"/><rect x="1" y="4" width="1" height="1" fill="#696969"/><rect x="2" y="4" width="3" height="1" fill="#ffffff"/><rect x="5" y="4" width="2" height="1" fill="#000000"/><rect x="7" y="4" width="3" height="1" fill="#ffffff"/><rect x="10" y="4" width="1" height="1" fill="#e3e3e3"/><rect x="11" y="4" width="1" height="1" fill="#ffffff"/><rect x="0" y="5" width="1" height="1" fill="#a0a0a0"/><rect x="1" y="5" width="1" height="1" fill="#696969"/><rect x="2" y="5" width="2" height="1" fill="#ffffff"/><rect x="4" y="5" width="4" height="1" fill="#000000"/><rect x="8" y="5" width="2" height="1" fill="#ffffff"/><rect x="10" y="5" width="1" height="1" fill="#e3e3e3"/><rect x="11" y="5" width="1" height="1" fill="#ffffff"/><rect x="0" y="6" width="1" height="1" fill="#a0a0a0"/><rect x="1" y="6" width="1" height="1" fill="#696969"/><rect x="2" y="6" width="2" height="1" fill="#ffffff"/><rect x="4" y="6" width="4" height="1" fill="#000000"/><rect x="8" y="6" width="2" height="1" fill="#ffffff"/><rect x="10" y="6" width="1" height="1" fill="#e3e3e3"/><rect x="11" y="6" width="1" height="1" fill="#ffffff"/><rect x="0" y="7" width="1" height="1" fill="#a0a0a0"/><rect x="1" y="7" width="1" height="1" fill="#696969"/><rect x="2" y="7" width="3" height="1" fill="#ffffff"/><rect x="5" y="7" width="2" height="1" fill="#000000"/><rect x="7" y="7" width="3" height="1" fill="#ffffff"/><rect x="10" y="7" width="1" height="1" fill="#e3e3e3"/><rect x="11" y="7" width="1" height="1" fill="#ffffff"/><rect x="1" y="8" width="1" height="1" fill="#a0a0a0"/><rect x="2" y="8" width="1" height="1" fill="#696969"/><rect x="3" y="8" width="6" height="1" fill="#ffffff"/><rect x="9" y="8" width="1" height="1" fill="#e3e3e3"/><rect x="10" y="8" width="1" height="1" fill="#ffffff"/><rect x="1" y="9" width="1" height="1" fill="#a0a0a0"/><rect x="2" y="9" width="2" height="1" fill="#e3e3e3"/><rect x="4" y="9" width="4" height="1" fill="#ffffff"/><rect x="8" y="9" width="2" height="1" fill="#e3e3e3"/><rect x="10" y="9" width="1" height="1" fill="#ffffff"/><rect x="2" y="10" width="2" height="1" fill="#ffffff"/><rect x="4" y="10" width="4" height="1" fill="#e3e3e3"/><rect x="8" y="10" width="2" height="1" fill="#ffffff"/><rect x="4" y="11" width="4" height="1" fill="#ffffff"/></svg>
<span class="t" style="left:498.5px;top:555px;transform:scaleX(0.8759)">No</span>
<svg class="rb" style="left:522px;top:556px" width="12" height="12" viewBox="0 0 12 12" shape-rendering="crispEdges"><rect x="4" y="0" width="4" height="1" fill="#a0a0a0"/><rect x="2" y="1" width="2" height="1" fill="#a0a0a0"/><rect x="4" y="1" width="4" height="1" fill="#696969"/><rect x="8" y="1" width="2" height="1" fill="#a0a0a0"/><rect x="1" y="2" width="1" height="1" fill="#a0a0a0"/><rect x="2" y="2" width="2" height="1" fill="#696969"/><rect x="4" y="2" width="4" height="1" fill="#ffffff"/><rect x="8" y="2" width="2" height="1" fill="#696969"/><rect x="10" y="2" width="1" height="1" fill="#ffffff"/><rect x="1" y="3" width="1" height="1" fill="#a0a0a0"/><rect x="2" y="3" width="1" height="1" fill="#696969"/><rect x="3" y="3" width="6" height="1" fill="#ffffff"/><rect x="9" y="3" width="1" height="1" fill="#e3e3e3"/><rect x="10" y="3" width="1" height="1" fill="#ffffff"/><rect x="0" y="4" width="1" height="1" fill="#a0a0a0"/><rect x="1" y="4" width="1" height="1" fill="#696969"/><rect x="2" y="4" width="8" height="1" fill="#ffffff"/><rect x="10" y="4" width="1" height="1" fill="#e3e3e3"/><rect x="11" y="4" width="1" height="1" fill="#ffffff"/><rect x="0" y="5" width="1" height="1" fill="#a0a0a0"/><rect x="1" y="5" width="1" height="1" fill="#696969"/><rect x="2" y="5" width="8" height="1" fill="#ffffff"/><rect x="10" y="5" width="1" height="1" fill="#e3e3e3"/><rect x="11" y="5" width="1" height="1" fill="#ffffff"/><rect x="0" y="6" width="1" height="1" fill="#a0a0a0"/><rect x="1" y="6" width="1" height="1" fill="#696969"/><rect x="2" y="6" width="8" height="1" fill="#ffffff"/><rect x="10" y="6" width="1" height="1" fill="#e3e3e3"/><rect x="11" y="6" width="1" height="1" fill="#ffffff"/><rect x="0" y="7" width="1" height="1" fill="#a0a0a0"/><rect x="1" y="7" width="1" height="1" fill="#696969"/><rect x="2" y="7" width="8" height="1" fill="#ffffff"/><rect x="10" y="7" width="1" height="1" fill="#e3e3e3"/><rect x="11" y="7" width="1" height="1" fill="#ffffff"/><rect x="1" y="8" width="1" height="1" fill="#a0a0a0"/><rect x="2" y="8" width="1" height="1" fill="#696969"/><rect x="3" y="8" width="6" height="1" fill="#ffffff"/><rect x="9" y="8" width="1" height="1" fill="#e3e3e3"/><rect x="10" y="8" width="1" height="1" fill="#ffffff"/><rect x="1" y="9" width="1" height="1" fill="#a0a0a0"/><rect x="2" y="9" width="2" height="1" fill="#e3e3e3"/><rect x="4" y="9" width="4" height="1" fill="#ffffff"/><rect x="8" y="9" width="2" height="1" fill="#e3e3e3"/><rect x="10" y="9" width="1" height="1" fill="#ffffff"/><rect x="2" y="10" width="2" height="1" fill="#ffffff"/><rect x="4" y="10" width="4" height="1" fill="#e3e3e3"/><rect x="8" y="10" width="2" height="1" fill="#ffffff"/><rect x="4" y="11" width="4" height="1" fill="#ffffff"/></svg>
<span class="t" style="left:538.5px;top:555px;transform:scaleX(0.8772)">Even</span>
<svg class="rb" style="left:570px;top:556px" width="12" height="12" viewBox="0 0 12 12" shape-rendering="crispEdges"><rect x="4" y="0" width="4" height="1" fill="#a0a0a0"/><rect x="2" y="1" width="2" height="1" fill="#a0a0a0"/><rect x="4" y="1" width="4" height="1" fill="#696969"/><rect x="8" y="1" width="2" height="1" fill="#a0a0a0"/><rect x="1" y="2" width="1" height="1" fill="#a0a0a0"/><rect x="2" y="2" width="2" height="1" fill="#696969"/><rect x="4" y="2" width="4" height="1" fill="#ffffff"/><rect x="8" y="2" width="2" height="1" fill="#696969"/><rect x="10" y="2" width="1" height="1" fill="#ffffff"/><rect x="1" y="3" width="1" height="1" fill="#a0a0a0"/><rect x="2" y="3" width="1" height="1" fill="#696969"/><rect x="3" y="3" width="6" height="1" fill="#ffffff"/><rect x="9" y="3" width="1" height="1" fill="#e3e3e3"/><rect x="10" y="3" width="1" height="1" fill="#ffffff"/><rect x="0" y="4" width="1" height="1" fill="#a0a0a0"/><rect x="1" y="4" width="1" height="1" fill="#696969"/><rect x="2" y="4" width="8" height="1" fill="#ffffff"/><rect x="10" y="4" width="1" height="1" fill="#e3e3e3"/><rect x="11" y="4" width="1" height="1" fill="#ffffff"/><rect x="0" y="5" width="1" height="1" fill="#a0a0a0"/><rect x="1" y="5" width="1" height="1" fill="#696969"/><rect x="2" y="5" width="8" height="1" fill="#ffffff"/><rect x="10" y="5" width="1" height="1" fill="#e3e3e3"/><rect x="11" y="5" width="1" height="1" fill="#ffffff"/><rect x="0" y="6" width="1" height="1" fill="#a0a0a0"/><rect x="1" y="6" width="1" height="1" fill="#696969"/><rect x="2" y="6" width="8" height="1" fill="#ffffff"/><rect x="10" y="6" width="1" height="1" fill="#e3e3e3"/><rect x="11" y="6" width="1" height="1" fill="#ffffff"/><rect x="0" y="7" width="1" height="1" fill="#a0a0a0"/><rect x="1" y="7" width="1" height="1" fill="#696969"/><rect x="2" y="7" width="8" height="1" fill="#ffffff"/><rect x="10" y="7" width="1" height="1" fill="#e3e3e3"/><rect x="11" y="7" width="1" height="1" fill="#ffffff"/><rect x="1" y="8" width="1" height="1" fill="#a0a0a0"/><rect x="2" y="8" width="1" height="1" fill="#696969"/><rect x="3" y="8" width="6" height="1" fill="#ffffff"/><rect x="9" y="8" width="1" height="1" fill="#e3e3e3"/><rect x="10" y="8" width="1" height="1" fill="#ffffff"/><rect x="1" y="9" width="1" height="1" fill="#a0a0a0"/><rect x="2" y="9" width="2" height="1" fill="#e3e3e3"/><rect x="4" y="9" width="4" height="1" fill="#ffffff"/><rect x="8" y="9" width="2" height="1" fill="#e3e3e3"/><rect x="10" y="9" width="1" height="1" fill="#ffffff"/><rect x="2" y="10" width="2" height="1" fill="#ffffff"/><rect x="4" y="10" width="4" height="1" fill="#e3e3e3"/><rect x="8" y="10" width="2" height="1" fill="#ffffff"/><rect x="4" y="11" width="4" height="1" fill="#ffffff"/></svg>
<span class="t" style="left:586.5px;top:555px;transform:scaleX(0.846)">Odd</span>
<span class="t" style="left:640.5px;top:554px;transform:scaleX(0.86)">Stop</span>
<svg class="rb" style="left:666px;top:556px" width="12" height="12" viewBox="0 0 12 12" shape-rendering="crispEdges"><rect x="4" y="0" width="4" height="1" fill="#a0a0a0"/><rect x="2" y="1" width="2" height="1" fill="#a0a0a0"/><rect x="4" y="1" width="4" height="1" fill="#696969"/><rect x="8" y="1" width="2" height="1" fill="#a0a0a0"/><rect x="1" y="2" width="1" height="1" fill="#a0a0a0"/><rect x="2" y="2" width="2" height="1" fill="#696969"/><rect x="4" y="2" width="4" height="1" fill="#ffffff"/><rect x="8" y="2" width="2" height="1" fill="#696969"/><rect x="10" y="2" width="1" height="1" fill="#ffffff"/><rect x="1" y="3" width="1" height="1" fill="#a0a0a0"/><rect x="2" y="3" width="1" height="1" fill="#696969"/><rect x="3" y="3" width="6" height="1" fill="#ffffff"/><rect x="9" y="3" width="1" height="1" fill="#e3e3e3"/><rect x="10" y="3" width="1" height="1" fill="#ffffff"/><rect x="0" y="4" width="1" height="1" fill="#a0a0a0"/><rect x="1" y="4" width="1" height="1" fill="#696969"/><rect x="2" y="4" width="3" height="1" fill="#ffffff"/><rect x="5" y="4" width="2" height="1" fill="#000000"/><rect x="7" y="4" width="3" height="1" fill="#ffffff"/><rect x="10" y="4" width="1" height="1" fill="#e3e3e3"/><rect x="11" y="4" width="1" height="1" fill="#ffffff"/><rect x="0" y="5" width="1" height="1" fill="#a0a0a0"/><rect x="1" y="5" width="1" height="1" fill="#696969"/><rect x="2" y="5" width="2" height="1" fill="#ffffff"/><rect x="4" y="5" width="4" height="1" fill="#000000"/><rect x="8" y="5" width="2" height="1" fill="#ffffff"/><rect x="10" y="5" width="1" height="1" fill="#e3e3e3"/><rect x="11" y="5" width="1" height="1" fill="#ffffff"/><rect x="0" y="6" width="1" height="1" fill="#a0a0a0"/><rect x="1" y="6" width="1" height="1" fill="#696969"/><rect x="2" y="6" width="2" height="1" fill="#ffffff"/><rect x="4" y="6" width="4" height="1" fill="#000000"/><rect x="8" y="6" width="2" height="1" fill="#ffffff"/><rect x="10" y="6" width="1" height="1" fill="#e3e3e3"/><rect x="11" y="6" width="1" height="1" fill="#ffffff"/><rect x="0" y="7" width="1" height="1" fill="#a0a0a0"/><rect x="1" y="7" width="1" height="1" fill="#696969"/><rect x="2" y="7" width="3" height="1" fill="#ffffff"/><rect x="5" y="7" width="2" height="1" fill="#000000"/><rect x="7" y="7" width="3" height="1" fill="#ffffff"/><rect x="10" y="7" width="1" height="1" fill="#e3e3e3"/><rect x="11" y="7" width="1" height="1" fill="#ffffff"/><rect x="1" y="8" width="1" height="1" fill="#a0a0a0"/><rect x="2" y="8" width="1" height="1" fill="#696969"/><rect x="3" y="8" width="6" height="1" fill="#ffffff"/><rect x="9" y="8" width="1" height="1" fill="#e3e3e3"/><rect x="10" y="8" width="1" height="1" fill="#ffffff"/><rect x="1" y="9" width="1" height="1" fill="#a0a0a0"/><rect x="2" y="9" width="2" height="1" fill="#e3e3e3"/><rect x="4" y="9" width="4" height="1" fill="#ffffff"/><rect x="8" y="9" width="2" height="1" fill="#e3e3e3"/><rect x="10" y="9" width="1" height="1" fill="#ffffff"/><rect x="2" y="10" width="2" height="1" fill="#ffffff"/><rect x="4" y="10" width="4" height="1" fill="#e3e3e3"/><rect x="8" y="10" width="2" height="1" fill="#ffffff"/><rect x="4" y="11" width="4" height="1" fill="#ffffff"/></svg>
<span class="t" style="left:683.5px;top:555px;transform:scaleX(0.86)">1</span>
<svg class="rb" style="left:698px;top:556px" width="12" height="12" viewBox="0 0 12 12" shape-rendering="crispEdges"><rect x="4" y="0" width="4" height="1" fill="#a0a0a0"/><rect x="2" y="1" width="2" height="1" fill="#a0a0a0"/><rect x="4" y="1" width="4" height="1" fill="#696969"/><rect x="8" y="1" width="2" height="1" fill="#a0a0a0"/><rect x="1" y="2" width="1" height="1" fill="#a0a0a0"/><rect x="2" y="2" width="2" height="1" fill="#696969"/><rect x="4" y="2" width="4" height="1" fill="#ffffff"/><rect x="8" y="2" width="2" height="1" fill="#696969"/><rect x="10" y="2" width="1" height="1" fill="#ffffff"/><rect x="1" y="3" width="1" height="1" fill="#a0a0a0"/><rect x="2" y="3" width="1" height="1" fill="#696969"/><rect x="3" y="3" width="6" height="1" fill="#ffffff"/><rect x="9" y="3" width="1" height="1" fill="#e3e3e3"/><rect x="10" y="3" width="1" height="1" fill="#ffffff"/><rect x="0" y="4" width="1" height="1" fill="#a0a0a0"/><rect x="1" y="4" width="1" height="1" fill="#696969"/><rect x="2" y="4" width="8" height="1" fill="#ffffff"/><rect x="10" y="4" width="1" height="1" fill="#e3e3e3"/><rect x="11" y="4" width="1" height="1" fill="#ffffff"/><rect x="0" y="5" width="1" height="1" fill="#a0a0a0"/><rect x="1" y="5" width="1" height="1" fill="#696969"/><rect x="2" y="5" width="8" height="1" fill="#ffffff"/><rect x="10" y="5" width="1" height="1" fill="#e3e3e3"/><rect x="11" y="5" width="1" height="1" fill="#ffffff"/><rect x="0" y="6" width="1" height="1" fill="#a0a0a0"/><rect x="1" y="6" width="1" height="1" fill="#696969"/><rect x="2" y="6" width="8" height="1" fill="#ffffff"/><rect x="10" y="6" width="1" height="1" fill="#e3e3e3"/><rect x="11" y="6" width="1" height="1" fill="#ffffff"/><rect x="0" y="7" width="1" height="1" fill="#a0a0a0"/><rect x="1" y="7" width="1" height="1" fill="#696969"/><rect x="2" y="7" width="8" height="1" fill="#ffffff"/><rect x="10" y="7" width="1" height="1" fill="#e3e3e3"/><rect x="11" y="7" width="1" height="1" fill="#ffffff"/><rect x="1" y="8" width="1" height="1" fill="#a0a0a0"/><rect x="2" y="8" width="1" height="1" fill="#696969"/><rect x="3" y="8" width="6" height="1" fill="#ffffff"/><rect x="9" y="8" width="1" height="1" fill="#e3e3e3"/><rect x="10" y="8" width="1" height="1" fill="#ffffff"/><rect x="1" y="9" width="1" height="1" fill="#a0a0a0"/><rect x="2" y="9" width="2" height="1" fill="#e3e3e3"/><rect x="4" y="9" width="4" height="1" fill="#ffffff"/><rect x="8" y="9" width="2" height="1" fill="#e3e3e3"/><rect x="10" y="9" width="1" height="1" fill="#ffffff"/><rect x="2" y="10" width="2" height="1" fill="#ffffff"/><rect x="4" y="10" width="4" height="1" fill="#e3e3e3"/><rect x="8" y="10" width="2" height="1" fill="#ffffff"/><rect x="4" y="11" width="4" height="1" fill="#ffffff"/></svg>
<span class="t" style="left:715.5px;top:555px;transform:scaleX(0.86)">2</span>
<div class="btn" style="left:730px;top:546px;width:104px;height:25px"></div>
<span class="t c" style="left:632.0px;top:551px;transform:scaleX(0.86)">Write Settings</span>
<span class="t" style="left:782.5px;top:634px;transform:scaleX(0.868)">Release 3.0.0.0</span>
</body></html>
